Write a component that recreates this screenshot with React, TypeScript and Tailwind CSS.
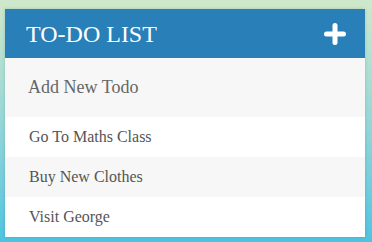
import React from "react";

export default function App() {
  const todos = ["Go To Maths Class", "Buy New Clothes", "Visit George"];
  return (
    <div className="w-[372px] h-[242px] overflow-hidden bg-gradient-to-b from-[#cfe8ca] to-[#4cc4e1] pt-[9px] pl-[5px] font-['Liberation_Serif','Times_New_Roman',serif]">
      <div className="w-[360px] bg-white shadow-[0_0_3px_rgba(0,0,0,0.15)]">
        <div className="h-[49px] bg-[#2980b9] flex items-center justify-between pl-[21px] pr-[19px]">
          <h1 className="text-white text-[24px] leading-none font-normal">TO-DO LIST</h1>
          <svg width="22" height="22" viewBox="0 0 22 22">
            <path d="M11 2.5V19.5M2.5 11H19.5" stroke="white" strokeWidth="5" strokeLinecap="round" />
          </svg>
        </div>
        <div className="h-[59px] bg-[#f7f7f7] flex items-center pl-[23px]">
          <span className="text-[18px] text-[#666]">Add New Todo</span>
        </div>
        <ul>
          {todos.map((t, i) => (
            <li
              key={t}
              className={
                i % 2 === 1
                  ? "h-[40px] flex items-center pl-[24px] text-[16px] text-[#555] bg-[#f7f7f7]"
                  : "h-[40px] flex items-center pl-[24px] text-[16px] text-[#555] bg-white"
              }
            >
              {t}
            </li>
          ))}
        </ul>
      </div>
    </div>
  );
}
